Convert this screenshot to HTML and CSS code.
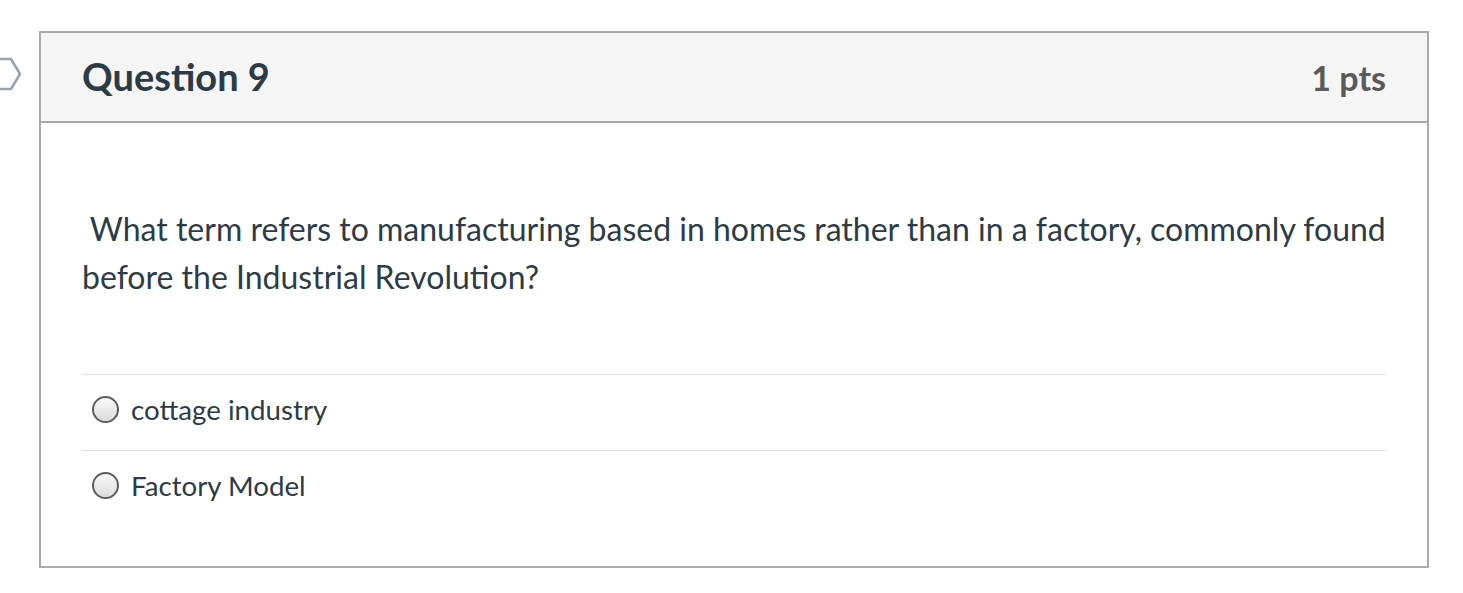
FILE: index.html
```html
<!DOCTYPE html>
<html>
<head>
<meta charset="utf-8">
<link rel="stylesheet" href="styles.css">
</head>
<body>
<div class="page">
  <div class="flag">
    <svg width="40" height="34" viewBox="0 0 40 34"><path d="M-20 2 H28 L37 17 L28 32 H-20" fill="none" stroke="#94a4b0" stroke-width="2.5" stroke-linejoin="round"/></svg>
  </div>
  <div class="question">
    <div class="header">
      <h2 class="title">Question 9</h2>
      <span class="pts">1 pts</span>
    </div>
    <div class="body">
      <p class="text">&nbsp;What term refers to manufacturing based in homes rather than in a factory, commonly found before the Industrial Revolution?</p>
      <div class="answers">
        <label class="answer"><span class="radio"></span><span class="label">cottage industry</span></label>
        <label class="answer"><span class="radio"></span><span class="label">Factory Model</span></label>
      </div>
    </div>
  </div>
</div>
</body>
</html>
```
FILE: styles.css
```css
html, body {
  margin: 0;
  padding: 0;
  background: #fff;
}
body {
  font-family: Lato, "Noto Sans", sans-serif;
  color: #2d3b45;
}
.page {
  position: relative;
  padding-top: 31px;
  padding-left: 39px;
}
.flag {
  position: absolute;
  left: -17px;
  top: 57px;
}
.question {
  width: 1386px;
  border: 2px solid #aaaaaa;
}
.header {
  height: 88px;
  background: #f5f5f5;
  border-bottom: 2px solid #aaaaaa;
  display: flex;
  align-items: center;
  justify-content: space-between;
  padding: 0 41px 0 41px;
}
.title {
  margin: 0 0 2px 0;
  font-size: 38px;
  font-weight: 700;
  color: #2d3b45;
}
.pts {
  font-size: 34px;
  font-weight: 700;
  color: #5a5a5a;
}
.body {
  padding: 82px 41px 40px 41px;
}
.text {
  margin: 0;
  font-size: 32px;
  line-height: 48px;
}
.answers {
  margin-top: 73px;
}
.answer {
  display: flex;
  align-items: center;
  box-sizing: border-box;
  height: 76px;
  padding-bottom: 6px;
  border-top: 1px solid #dddddd;
}
.radio {
  width: 23px;
  height: 23px;
  border: 2px solid #5c5c5c;
  border-radius: 50%;
  background: linear-gradient(#fafafa, #dcdcdc);
  margin-left: 10px;
  margin-right: 12px;
  flex: none;
}
.label {
  font-size: 27.7px;
}
```
